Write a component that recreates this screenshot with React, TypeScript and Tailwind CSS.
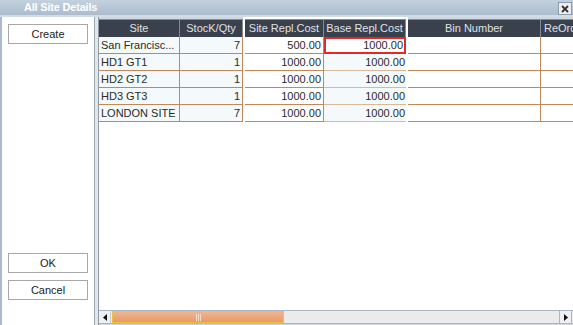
import React from "react";

const rows = [
  ["San Francisc...", "7", "500.00", "1000.00"],
  ["HD1 GT1", "1", "1000.00", "1000.00"],
  ["HD2 GT2", "1", "1000.00", "1000.00"],
  ["HD3 GT3", "1", "1000.00", "1000.00"],
  ["LONDON SITE", "7", "1000.00", "1000.00"],
];

function Btn({ label }: { label: string }) {
  return (
    <div className="ml-[6px] w-[80px] h-[20px] border border-[#a8a8a8] bg-white flex items-center justify-center text-[#222] text-[11px] leading-none">
      {label}
    </div>
  );
}

function HeadCell({ w, label }: { w: string; label: string }) {
  return (
    <div
      className={`${w} h-full shrink-0 flex items-center justify-center bg-[#3b404d] border-r border-t border-[#858b95] text-[#dfe2e7] text-[11px] leading-none whitespace-nowrap overflow-hidden`}
    >
      {label}
    </div>
  );
}

export default function App() {
  return (
    <div className="w-[573px] h-[325px] overflow-hidden flex flex-col bg-[#c9d5e1] font-['Liberation_Sans',Arial,sans-serif] text-[11px]">
      {/* title bar */}
      <div className="h-[15px] shrink-0 flex items-center justify-between bg-gradient-to-b from-[#c3d1de] to-[#abbccd] pl-[24px] pr-[1px]">
        <span className="text-white font-bold leading-none text-[11px] tracking-[-0.2px]">All Site Details</span>
        <div className="w-[14px] h-[13px] mt-[2px] border border-[#8f9cab] bg-[#eceef1] flex items-center justify-center">
          <svg width="8" height="8" viewBox="0 0 8 8">
            <path d="M1 1 L7 7 M7 1 L1 7" stroke="#333" strokeWidth="1.8" />
          </svg>
        </div>
      </div>
      <div className="h-[2px] shrink-0 bg-[#d2dce6]" />
      <div className="flex-1 flex min-h-0">
        {/* left panel */}
        <div className="w-[94px] shrink-0 border-l-2 border-[#a9b9c9] bg-white flex flex-col pt-[7px] pb-[25px]">
          <Btn label="Create" />
          <div className="flex-1" />
          <Btn label="OK" />
          <div className="h-[7px]" />
          <Btn label="Cancel" />
        </div>
        {/* separator */}
        <div className="w-[5px] shrink-0 flex">
          <div className="w-[1px] bg-[#9ba7b3]" />
          <div className="w-[3px] bg-[#e1e6eb]" />
          <div className="w-[1px] bg-[#8f99a4]" />
        </div>
        {/* table area */}
        <div className="flex-1 min-w-0 flex flex-col overflow-hidden">
          <div className="h-[2px] shrink-0 flex">
            <div className="w-[144px] shrink-0 bg-[#cfd9e3]" />
            <div className="w-[165px] shrink-0 bg-white" />
            <div className="flex-1 bg-[#cfd9e3]" />
          </div>
          {/* header */}
          <div className="h-[18px] shrink-0 flex">
            <HeadCell w="w-[81px]" label="Site" />
            <HeadCell w="w-[63px]" label="StocK/Qty" />
            <div className="w-[2px] shrink-0 bg-white" />
            <HeadCell w="w-[79px]" label="Site Repl.Cost" />
            <HeadCell w="w-[82px]" label="Base Repl.Cost" />
            <div className="w-[2px] shrink-0 bg-white" />
            <HeadCell w="w-[133px]" label="Bin Number" />
            <div className="w-[60px] h-full shrink-0 flex items-center pl-[3px] bg-[#3b404d] border-t border-[#858b95] text-[#dfe2e7] leading-none whitespace-nowrap overflow-hidden">
              ReOrder
            </div>
          </div>
          {/* rows */}
          {rows.map((r, i) => (
            <div key={i} className="h-[17px] shrink-0 flex text-[#2a2a2a] leading-none">
              <div className="w-[81px] shrink-0 flex items-center pl-[2px] bg-[#f4fafc] border-r border-b border-[#c2875a] whitespace-nowrap overflow-hidden">
                {r[0]}
              </div>
              <div className="w-[63px] shrink-0 flex items-center justify-end pr-[2px] bg-[#f4fafc] border-r border-b border-[#c2875a]">
                {r[1]}
              </div>
              <div className="w-[2px] shrink-0 bg-white" />
              <div className="w-[79px] shrink-0 flex items-center justify-end pr-[2px] bg-white border-r border-b border-[#c2875a]">
                {r[2]}
              </div>
              <div
                className={`w-[82px] shrink-0 flex items-center justify-end pr-[1px] ${
                  i === 0 ? "border-2 border-[#e02a2a] bg-white" : "bg-[#f4fafc] border-b border-[#d9b99c]"
                }`}
              >
                {r[3]}
              </div>
              <div className="w-[2px] shrink-0 bg-white" />
              <div className="w-[133px] shrink-0 bg-white border-r border-b border-[#c2875a]" />
              <div className="w-[60px] shrink-0 bg-white border-b border-[#c2875a]" />
            </div>
          ))}
          <div className="flex-1 bg-white" />
          {/* scrollbar */}
          <div className="h-[14px] shrink-0 flex bg-[#ebebeb] border-t border-b border-[#a9b7c6]">
            <div className="w-[12px] shrink-0 flex items-center justify-center bg-[#eef0f2] border-r border-[#c4ccd4]">
              <svg width="4" height="7" viewBox="0 0 4 7">
                <path d="M4 0 L0 3.5 L4 7 Z" fill="#111" />
              </svg>
            </div>
            <div className="ml-[1px] w-[172px] shrink-0 flex items-center justify-center bg-gradient-to-b from-[#f0b58e] to-[#e89a6a] border border-[#f2c13c]">
              <div className="flex gap-[1px]">
                <div className="w-[1px] h-[7px] bg-[#f7dccb]" />
                <div className="w-[1px] h-[7px] bg-[#f7dccb]" />
                <div className="w-[1px] h-[7px] bg-[#f7dccb]" />
              </div>
            </div>
            <div className="flex-1" />
            <div className="w-[13px] shrink-0 flex items-center justify-center bg-[#eef0f2] border-l border-r border-[#a9b7c6] mr-[1px]">
              <svg width="4" height="7" viewBox="0 0 4 7">
                <path d="M0 0 L4 3.5 L0 7 Z" fill="#111" />
              </svg>
            </div>
          </div>
          <div className="h-[1px] shrink-0 bg-[#c9d5e1]" />
        </div>
      </div>
    </div>
  );
}
